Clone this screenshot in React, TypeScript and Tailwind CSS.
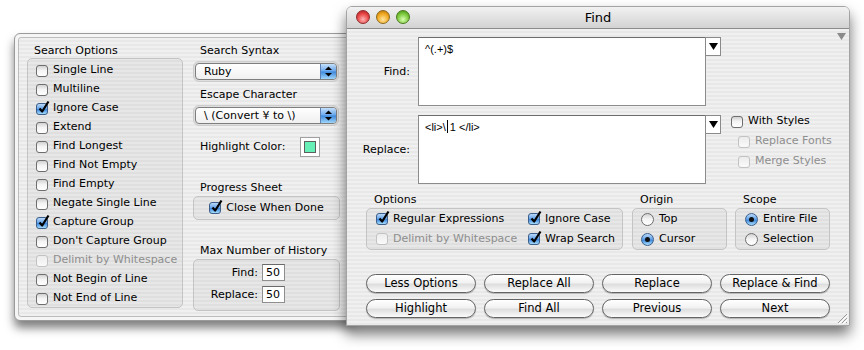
import type { ReactNode } from 'react';

/* ─── Aqua bits ──────────────────────────────────────────────── */

const pin =
  'bg-[image:repeating-linear-gradient(180deg,#f0f0f0_0px,#f0f0f0_2px,#e8e8e8_2px,#e8e8e8_4px)]';
const group = 'rounded-[5px] border border-[#c4c4c4] bg-black/[0.035]';

function Check({ on = false, dim = false }: { on?: boolean; dim?: boolean }) {
  const face = on
    ? 'border-[#3b5f8a] bg-[linear-gradient(#b9d8f8,#6aa6ea_45%,#3f88de_55%,#a6dcfb)]'
    : dim
      ? 'border-[#c2c2c2] bg-[linear-gradient(#ececec,#fafafa)]'
      : 'border-[#6e6e6e] bg-[linear-gradient(#d2d2d2,#f4f4f4_45%,#ffffff)]';
  return (
    <span className={`relative inline-block h-[12px] w-[12px] shrink-0 rounded-[3px] border ${face}`}>
      {on && (
        <svg className="absolute -top-[4px] left-[0px] h-[14px] w-[14px]" viewBox="0 0 14 14">
          <path d="M2.5 8.5 L5.2 11.5 L11.5 1.5" stroke="#000" strokeWidth="2.2" fill="none" strokeLinejoin="round" />
        </svg>
      )}
    </span>
  );
}

function Radio({ on = false }: { on?: boolean }) {
  const face = on
    ? 'border-[#3b5f8a] bg-[linear-gradient(#b9d8f8,#6aa6ea_45%,#3f88de_55%,#a6dcfb)]'
    : 'border-[#6e6e6e] bg-[linear-gradient(#d2d2d2,#f4f4f4_45%,#ffffff)]';
  return (
    <span className={`flex h-[13px] w-[13px] shrink-0 items-center justify-center rounded-full border ${face}`}>
      {on && <span className="h-[5px] w-[5px] rounded-full bg-[#111]" />}
    </span>
  );
}

function Opt({ children, on, dim, radio }: { children: ReactNode; on?: boolean; dim?: boolean; radio?: boolean }) {
  return (
    <div className={`flex items-center gap-[5px] ${dim ? 'text-[#8e8e8e]' : 'text-black'}`}>
      {radio ? <Radio on={on} /> : <Check on={on} dim={dim} />}
      <span>{children}</span>
    </div>
  );
}

function PopUp({ label }: { label: string }) {
  return (
    <div className="h-[21px] w-[146px] rounded-[6px] border border-[#cdcdcd] bg-[#dedede] p-[1px]">
      <div className="flex h-[17px] overflow-hidden rounded-[4px] border border-[#7e7e7e] bg-[linear-gradient(#ffffff,#f0f0f0)]">
        <span className="flex-1 pl-[8px] leading-[15px]">{label}</span>
        <span className="flex w-[16px] items-center justify-center border-l border-[#5a7fb0] bg-[linear-gradient(#c4e0fb,#6aa8ee_48%,#3e89de_52%,#9fd6fb)]">
          <svg width="7" height="11" viewBox="0 0 7 11">
            <polygon points="0,4 3.5,0.5 7,4" fill="#000" />
            <polygon points="0,7 7,7 3.5,10.5" fill="#000" />
          </svg>
        </span>
      </div>
    </div>
  );
}

function Push({ children }: { children: ReactNode }) {
  return (
    <div className="flex h-[19px] w-[110px] items-center justify-center rounded-full border border-[#646464] bg-[linear-gradient(#ffffff,#f2f2f2_45%,#dedede_55%,#fbfbfb)] text-[11.5px] shadow-[0_1px_1px_rgba(0,0,0,0.25)]">
      {children}
    </div>
  );
}

function DropArrow() {
  return (
    <div className="flex h-[19px] w-[16px] items-center justify-center border border-[#8a8a8a] bg-white">
      <svg width="9" height="7" viewBox="0 0 9 7">
        <polygon points="0,0 9,0 4.5,7" fill="#000" />
      </svg>
    </div>
  );
}

const searchOptions: [string, boolean, boolean][] = [
  ['Single Line', false, false],
  ['Multiline', false, false],
  ['Ignore Case', true, false],
  ['Extend', false, false],
  ['Find Longest', false, false],
  ['Find Not Empty', false, false],
  ['Find Empty', false, false],
  ['Negate Single Line', false, false],
  ['Capture Group', true, false],
  ["Don't Capture Group", false, false],
  ['Delimit by Whitespace', false, true],
  ['Not Begin of Line', false, false],
  ['Not End of Line', false, false],
];

/* ─── Drawer ─────────────────────────────────────────────────── */

function Drawer() {
  return (
    <div className="absolute left-[14px] top-[33px] h-[288px] w-[340px] rounded-l-[6px] border border-[#9a9a9a] bg-[#f5f5f5] p-[3px] shadow-[0_7px_10px_rgba(0,0,0,0.5)]">
      <div className={`flex h-full gap-[10px] rounded-l-[3px] border border-[#bdbdbd] pl-[8px] pt-[6px] ${pin}`}>
        <div className="flex w-[156px] flex-col">
          <div className="h-[14px] pl-[7px] leading-[14px]">Search Options</div>
          <div className={`h-[250px] pt-[2px] ${group}`}>
            {searchOptions.map(([t, on, dim]) => (
              <div key={t} className="flex h-[19px] items-center pl-[8px]">
                <Opt on={on} dim={dim}>
                  {t}
                </Opt>
              </div>
            ))}
          </div>
        </div>

        <div className="flex w-[147px] flex-col">
          <div className="h-[14px] pl-[7px] leading-[14px]">Search Syntax</div>
          <div className="mt-[3px]">
            <PopUp label="Ruby" />
          </div>
          <div className="mt-[6px] h-[14px] pl-[7px] leading-[14px]">Escape Character</div>
          <div className="mt-[3px]">
            <PopUp label="\ (Convert ¥ to \)" />
          </div>
          <div className="mt-[11px] flex h-[20px] items-center pl-[7px]">
            <span className="w-[100px]">Highlight Color:</span>
            <span className="h-[20px] w-[20px] border border-[#a0a0a0] bg-white p-[3px]">
              <span className="block h-full w-full border border-[#5e5e5e] bg-[#66f0b8]" />
            </span>
          </div>
          <div className="mt-[24px] h-[14px] pl-[7px] leading-[14px]">Progress Sheet</div>
          <div className={`mt-[1px] flex h-[24px] items-center justify-center ${group}`}>
            <Opt on>Close When Done</Opt>
          </div>
          <div className="mt-[24px] h-[14px] pl-[7px] leading-[14px]">Max Number of History</div>
          <div className={`mt-[1px] grid h-[52px] grid-cols-[64px_auto] content-start gap-x-[4px] gap-y-[5px] pt-[4px] ${group}`}>
            <span className="text-right leading-[17px]">Find:</span>
            <span className="h-[17px] w-[23px] border border-[#8e8e8e] border-t-[#6a6a6a] bg-white pl-[3px] leading-[15px]">50</span>
            <span className="text-right leading-[17px]">Replace:</span>
            <span className="h-[17px] w-[23px] border border-[#8e8e8e] border-t-[#6a6a6a] bg-white pl-[3px] leading-[15px]">50</span>
          </div>
        </div>
      </div>
    </div>
  );
}

/* ─── Find window ────────────────────────────────────────────── */

const field = "border border-[#8c8c8c] border-t-[#6c6c6c] bg-white pl-[6px] pt-[3px] font-['Liberation_Sans',sans-serif] text-[11px]";

function FindWindow() {
  return (
    <div className="absolute left-[346px] top-[6px] flex h-[320px] w-[504px] flex-col rounded-t-[6px] border border-[#a3a3a3] shadow-[0_8px_14px_rgba(0,0,0,0.55)]">
      <div className="relative flex h-[22px] shrink-0 items-center justify-center rounded-t-[5px] border-b border-[#8c8c8c] bg-[linear-gradient(#f2f2f2,#e2e2e2_50%,#d2d2d2)]">
        <div className="absolute left-[9px] top-[3px] flex gap-[6px]">
          <span className="h-[14px] w-[14px] rounded-full border border-[#8d2a2a] bg-[radial-gradient(circle_at_50%_70%,#ffb3b3,#e84545_55%,#a31c1c)]" />
          <span className="h-[14px] w-[14px] rounded-full border border-[#8d6a1c] bg-[radial-gradient(circle_at_50%_70%,#ffe6a0,#f0a820_55%,#b26a08)]" />
          <span className="h-[14px] w-[14px] rounded-full border border-[#4a7a1c] bg-[radial-gradient(circle_at_50%_70%,#d8ffb0,#7cc83c_55%,#3f8a12)]" />
        </div>
        <span className="pt-[1px] text-[13px]">Find</span>
      </div>

      <div className={`relative flex flex-1 flex-col pt-[8px] ${pin}`}>
        <svg className="absolute right-[3px] top-[4px]" width="9" height="7" viewBox="0 0 9 7">
          <polygon points="0,0 9,0 4.5,7" fill="#8a8a8a" />
        </svg>

        <div className="flex items-start">
          <div className="flex h-[69px] w-[71px] items-center justify-end pr-[8px] pt-[2px]">Find:</div>
          <div className={`h-[69px] w-[288px] ${field}`}>^(.+)$</div>
          <div className="-ml-[1px]">
            <DropArrow />
          </div>
        </div>

        <div className="mt-[9px] flex items-start">
          <div className="flex h-[69px] w-[71px] items-center justify-end pr-[8px] pt-[2px]">Replace:</div>
          <div className={`flex h-[69px] w-[288px] items-start ${field}`}>
            <span>&lt;li&gt;\</span>
            <span className="ml-[1px] mr-[2px] mt-[1px] h-[13px] w-[1px] bg-black" />
            <span>1 &lt;/li&gt;</span>
          </div>
          <div className="-ml-[1px]">
            <DropArrow />
          </div>
          <div className="ml-[10px] flex flex-col gap-[7px]">
            <div className="flex h-[13px] items-center">
              <Opt>With Styles</Opt>
            </div>
            <div className="flex h-[13px] items-center pl-[7px]">
              <Opt dim>Replace Fonts</Opt>
            </div>
            <div className="flex h-[13px] items-center pl-[7px]">
              <Opt dim>Merge Styles</Opt>
            </div>
          </div>
        </div>

        <div className="mt-[9px] flex gap-[9px] pl-[19px]">
          <div className="flex w-[257px] flex-col">
            <div className="h-[14px] pl-[8px] leading-[14px]">Options</div>
            <div className={`mt-[1px] grid h-[42px] grid-cols-[152px_auto] grid-rows-[20px_20px] items-center pl-[9px] ${group}`}>
              <Opt on>Regular Expressions</Opt>
              <Opt on>Ignore Case</Opt>
              <Opt dim>Delimit by Whitespace</Opt>
              <Opt on>Wrap Search</Opt>
            </div>
          </div>
          <div className="flex w-[95px] flex-col">
            <div className="h-[14px] pl-[8px] leading-[14px]">Origin</div>
            <div className={`mt-[1px] grid h-[42px] grid-rows-[20px_20px] items-center pl-[8px] ${group}`}>
              <Opt radio>Top</Opt>
              <Opt radio on>Cursor</Opt>
            </div>
          </div>
          <div className="ml-[-1px] flex w-[95px] flex-col">
            <div className="h-[14px] pl-[8px] leading-[14px]">Scope</div>
            <div className={`mt-[1px] grid h-[42px] grid-rows-[20px_20px] items-center pl-[9px] ${group}`}>
              <Opt radio on>Entire File</Opt>
              <Opt radio>Selection</Opt>
            </div>
          </div>
        </div>

        <div className="mt-[24px] grid w-fit grid-cols-[110px_110px_110px_110px] gap-x-[8px] gap-y-[6px] pl-[19px]">
          <Push>Less Options</Push>
          <Push>Replace All</Push>
          <Push>Replace</Push>
          <Push>Replace &amp; Find</Push>
          <Push>Highlight</Push>
          <Push>Find All</Push>
          <Push>Previous</Push>
          <Push>Next</Push>
        </div>

        <svg className="absolute bottom-[1px] right-[1px]" width="12" height="12" viewBox="0 0 12 12">
          <path d="M11 2 L2 11 M11 6 L6 11 M11 10 L10 11" stroke="#9a9a9a" strokeWidth="1" />
          <path d="M12 3 L3 12 M12 7 L7 12" stroke="#ffffff" strokeWidth="1" />
        </svg>
      </div>
    </div>
  );
}

export default function App() {
  return (
    <div className="relative h-[350px] w-[864px] overflow-hidden bg-white font-['DejaVu_Sans',sans-serif] text-[11px] text-black">
      <Drawer />
      <FindWindow />
    </div>
  );
}
